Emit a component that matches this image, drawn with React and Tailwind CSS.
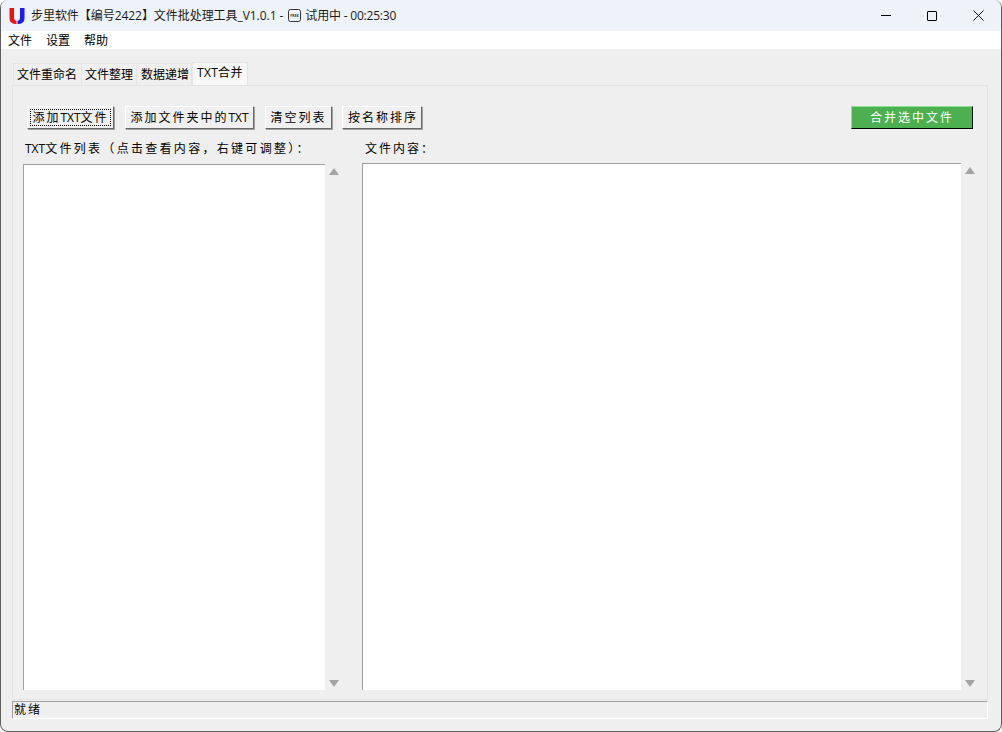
const font = { fontFamily: '"Open Sans", "Noto Sans CJK SC", sans-serif' };

const Logo = () => (
  <svg width="16" height="18" viewBox="0 0 16 18">
    <path d="M0.5 1 H5 V11 Q5 13.5 7.5 14 V17 Q0.5 17 0.5 11 Z" fill="#f01010" />
    <path d="M11 1 H15.5 V11 Q15.5 17 8.5 17 V14 Q11 13.5 11 11 Z" fill="#1a1aff" />
  </svg>
);

const FreeIcon = () => (
  <svg width="13" height="13" viewBox="0 0 13 13" fill="none">
    <rect x="0.5" y="0.5" width="12" height="12" rx="2" stroke="#333" />
    <text x="6.5" y="8" textAnchor="middle" fontSize="3.6" fontWeight="700" fill="#333">
      FREE
    </text>
  </svg>
);

const WinButton = ({ children }) => (
  <div className="flex h-[31px] w-[46px] items-center justify-center">{children}</div>
);

const Tab = ({ label, active, className }) =>
  active ? (
    <div className="-mb-px flex h-[24px] items-center border-x border-t border-[#e4e4e4] bg-[#f7f7f7] pr-[4px] pb-[3px] pl-[4px] text-[12px] tracking-[0.3px] text-black">
      {label}
    </div>
  ) : (
    <div className={`flex h-[22px] items-center border-t border-r border-[#e4e4e4] text-[12px] text-black first:border-l ${className}`}>
      {label}
    </div>
  );

const Btn = ({ children, width, focus }) => (
  <button
    className={`flex h-[23px] items-center justify-center border border-t-white border-l-white border-r-[#696969] border-b-[#696969] bg-[#f0f0f0] text-[12px] tracking-[2px] text-black shadow-[1px_1px_0_#a0a0a0] ${width}`}
  >
    <span className={focus ? 'flex h-[17px] w-full items-center justify-center border border-dotted border-black' : ''}>
      {children}
    </span>
  </button>
);

const Txt = () => <span className="tracking-normal">TXT</span>;

const ScrollArrows = ({ width }) => (
  <div className={`flex h-full flex-col items-center justify-between pt-[4px] pb-[3px] ${width}`}>
    <div className="h-0 w-0 border-x-[5px] border-b-[7px] border-x-transparent border-b-[#a3a3a3]" />
    <div className="h-0 w-0 border-x-[5px] border-t-[7px] border-x-transparent border-t-[#a3a3a3]" />
  </div>
);

export default function App() {
  return (
    <div
      className="flex h-[732px] w-[1002px] flex-col overflow-hidden rounded-[8px] border-x border-b border-[#5f5f5f] bg-[#efefef]"
      style={font}
    >
      {/* Title bar */}
      <div className="flex h-[31px] items-center justify-between bg-[#eef2f9] pl-2">
        <div className="flex items-center text-[12px] text-[#1a1a1a]">
          <Logo />
          <span className="ml-[6px] tracking-[-0.05px]">步里软件【编号2422】文件批处理工具_V1.0.1 -</span>
          <span className="mr-[4px] ml-[5px]">
            <FreeIcon />
          </span>
          <span className="tracking-[-0.2px]">试用中 - 00:25:30</span>
        </div>
        <div className="flex">
          <WinButton>
            <div className="h-px w-[10px] bg-black" />
          </WinButton>
          <WinButton>
            <div className="h-[10px] w-[10px] rounded-[1px] border border-black" />
          </WinButton>
          <WinButton>
            <svg width="11" height="11" viewBox="0 0 11 11" stroke="#111" fill="none">
              <path d="M0.5 0.5 L10.5 10.5 M10.5 0.5 L0.5 10.5" />
            </svg>
          </WinButton>
        </div>
      </div>

      {/* Menu */}
      <div className="flex h-[18px] items-center gap-[14px] bg-white pt-[2px] pl-[7px] text-[12px] text-black">
        <span>文件</span>
        <span>设置</span>
        <span>帮助</span>
      </div>

      {/* Tabs */}
      <div className="flex flex-1 flex-col pt-[13px] pr-[13px] pl-[11px]">
        <div className="flex items-end pl-px">
          <Tab label="文件重命名" className="pr-[4px] pl-[3px]" />
          <Tab label="文件整理" className="px-[3px]" />
          <Tab label="数据递增" className="pr-[2px] pl-[4px]" />
          <Tab label="TXT合并" active />
        </div>

        <div className="flex h-[615px] flex-col border border-[#e4e4e4] px-[10px] pt-[20px]">
          {/* Toolbar */}
          <div className="flex items-center pl-[4px]">
            <div className="flex gap-[11px]">
              <Btn width="w-[87px] px-[2px]" focus>
                添加<Txt />文件
              </Btn>
              <Btn width="w-[129px]">
                添加文件夹中的<Txt />
              </Btn>
              <Btn width="w-[67px]">清空列表</Btn>
              <Btn width="w-[80px] -ml-px pl-[2px]">按名称排序</Btn>
            </div>
            <button className="mr-[4px] ml-auto h-[23px] w-[122px] border border-t-[#8fe08f] border-l-[#8fe08f] border-r-black border-b-black bg-[#4caf50] text-[12px] tracking-[2px] text-white">
              合并选中文件
            </button>
          </div>

          {/* Lists */}
          <div className="mt-[11px] flex flex-1 gap-[19px]">
            <div className="flex w-[321px] flex-col">
              <div className="h-[24px] pl-[2px] text-[12px] leading-[18px] tracking-[2.3px] whitespace-nowrap text-black">
                <Txt />文件列表（点击查看内容，右键可调整）：
              </div>
              <div className="flex h-[526px]">
                <div className="w-[302px] border-t border-l border-[#a0a0a0] bg-white" />
                <ScrollArrows width="w-[18px]" />
              </div>
            </div>
            <div className="flex flex-1 flex-col">
              <div className="h-[23px] pl-[3px] text-[12px] leading-[18px] tracking-[2px] text-black">文件内容：</div>
              <div className="flex h-[527px]">
                <div className="w-[599px] border-t border-l border-[#a0a0a0] bg-white" />
                <ScrollArrows width="w-[18px]" />
              </div>
            </div>
          </div>
        </div>

        {/* Status bar */}
        <div className="mt-px flex h-[18px] items-center border border-t-[#a0a0a0] border-l-[#a0a0a0] border-r-white border-b-white bg-[#efefef] pl-px text-[12px] tracking-[2px] text-black">
          就绪
        </div>
        <div className="h-[13px]" />
      </div>
    </div>
  );
}
